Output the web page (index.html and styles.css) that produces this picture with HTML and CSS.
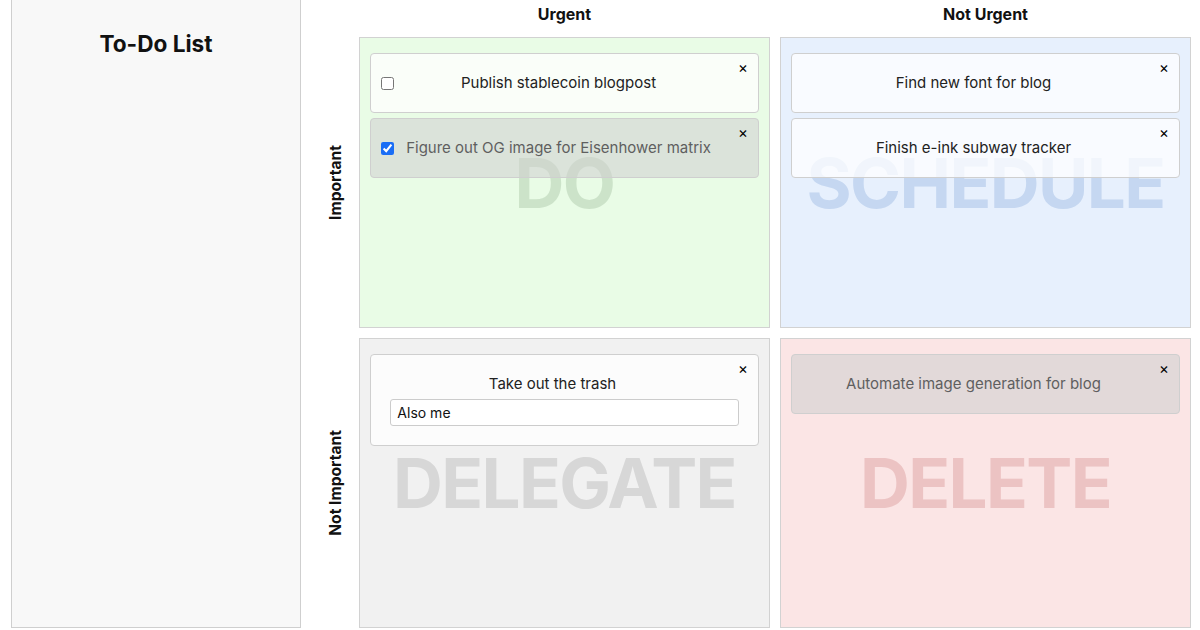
FILE: index.html
```html
<!DOCTYPE html>
<html lang="en">
<head>
<meta charset="utf-8">
<title>Eisenhower Matrix To-Do List</title>
<link rel="stylesheet" href="styles.css">
</head>
<body>
<div class="app">
  <aside class="sidebar">
    <h2 class="sidebar-title">To-Do List</h2>
  </aside>
  <main class="matrix">
    <div class="corner"></div>
    <div class="col-head">Urgent</div>
    <div class="col-head">Not Urgent</div>

    <div class="row-head"><span>Important</span></div>
    <section class="quad quad-do">
      <div class="watermark">DO</div>
      <div class="card">
        <input type="checkbox" class="check">
        <div class="card-text with-check">Publish stablecoin blogpost</div>
        <span class="close">×</span>
      </div>
      <div class="card done">
        <input type="checkbox" class="check" checked>
        <div class="card-text with-check">Figure out OG image for Eisenhower matrix</div>
        <span class="close">×</span>
      </div>
    </section>
    <section class="quad quad-schedule">
      <div class="watermark">SCHEDULE</div>
      <div class="card">
        <div class="card-text">Find new font for blog</div>
        <span class="close">×</span>
      </div>
      <div class="card">
        <div class="card-text">Finish e-ink subway tracker</div>
        <span class="close">×</span>
      </div>
    </section>

    <div class="row-head"><span>Not Important</span></div>
    <section class="quad quad-delegate">
      <div class="watermark">DELEGATE</div>
      <div class="card card-stack">
        <div class="card-text">Take out the trash</div>
        <input type="text" class="note" value="Also me">
        <span class="close">×</span>
      </div>
    </section>
    <section class="quad quad-delete">
      <div class="watermark">DELETE</div>
      <div class="card done">
        <div class="card-text">Automate image generation for blog</div>
        <span class="close">×</span>
      </div>
    </section>
  </main>
</div>
</body>
</html>
```

FILE: styles.css
```css
* { box-sizing: border-box; }

html, body {
  margin: 0;
  padding: 0;
  background: #ffffff;
  font-family: Inter, "Noto Sans", "Liberation Sans", sans-serif;
  color: #1d1d1d;
}

.app {
  display: flex;
  height: 630px;
  padding: 0 9px 0 11px;
}

.sidebar {
  width: 290px;
  height: 628px;
  flex: none;
  background: #f8f8f8;
  border: 1px solid #cfcfcf;
  border-top: 0;
  padding-top: 10px;
}

.sidebar-title {
  margin: 20px 0 0;
  text-align: center;
  font-size: 22.6px;
  font-weight: 700;
  color: #111;
}

.matrix {
  margin-left: 10px;
  flex: 1;
  height: 628px;
  display: grid;
  grid-template-columns: 38px 411px 411px;
  grid-template-rows: 27px 1fr 1fr;
  gap: 10px;
}

.col-head {
  display: flex;
  align-items: center;
  justify-content: center;
  font-size: 16px;
  font-weight: 700;
  color: #111;
}

.row-head {
  display: flex;
  align-items: center;
  justify-content: center;
  font-size: 15.6px;
  font-weight: 700;
  color: #111;
}

.row-head span {
  writing-mode: vertical-rl;
  transform: rotate(180deg);
  margin-left: 10px;
}

.quad {
  position: relative;
  border: 1px solid #d2d2d2;
  padding: 15px 10px 10px;
  display: flex;
  flex-direction: column;
  gap: 5px;
}

.quad-do { background: #e9fce6; }
.quad-schedule { background: #e7f0fd; }
.quad-delegate { background: #f1f1f1; }
.quad-delete { background: #fbe5e5; }

.watermark {
  position: absolute;
  inset: 0;
  display: flex;
  align-items: center;
  justify-content: center;
  font-size: 69px;
  font-weight: 700;
  letter-spacing: -1.6px;
  line-height: 1;
  padding-top: 2px;
  pointer-events: none;
  z-index: 0;
}

.quad-do .watermark { color: #cce3c9; }
.quad-schedule .watermark { color: #c5d7f1; }
.quad-delegate .watermark { color: #d7d7d7; }
.quad-delete .watermark { color: #ecc3c3; }

.card {
  position: relative;
  z-index: 1;
  display: flex;
  align-items: center;
  background: rgba(255, 255, 255, 0.75);
  border: 1px solid #cfcfcf;
  border-radius: 4px;
  padding: 19px 0;
  color: #222;
}

.card.done {
  background: rgba(209, 209, 209, 0.58);
  color: #5f5f5f;
}

.card-stack {
  flex-direction: column;
  align-items: stretch;
}

.check {
  flex: none;
  width: 13px;
  height: 13px;
  margin: 0 0 0 10px;
  accent-color: #1a6ef5;
}

.card-text {
  flex: 1;
  text-align: center;
  font-size: 15px;
  line-height: 20px;
  padding-right: 24px;
}

.card-text.with-check {
  padding-right: 35px;
}

.note {
  display: block;
  width: 90%;
  height: 27px;
  margin: 5px auto 0;
  padding: 0 6px;
  border: 1px solid #cccccc;
  border-radius: 3px;
  background: #ffffff;
  font-family: Inter, "Noto Sans", "Liberation Sans", sans-serif;
  font-size: 14px;
  color: #111;
}

.close {
  position: absolute;
  top: 6px;
  right: 10px;
  font-size: 15px;
  line-height: 16px;
  color: #000;
}
```
